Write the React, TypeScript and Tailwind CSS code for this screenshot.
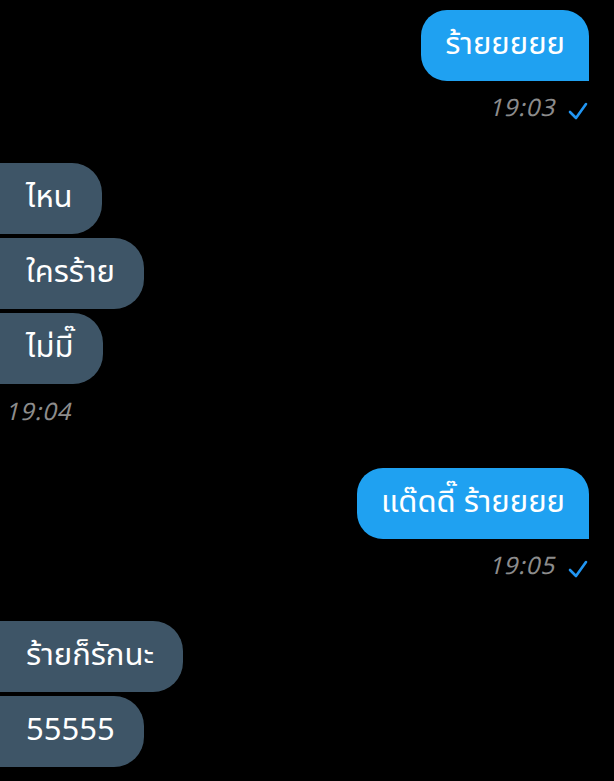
import React from 'react';

const font = { fontFamily: '"Noto Sans Thai", "Noto Sans", "Comic Sans MS", sans-serif' };

const Check = () => (
  <svg width="22" height="20" viewBox="0 0 22 20" className="ml-3 mt-1">
    <path d="M3 11 L9 17 L19 3" fill="none" stroke="#2196f3" strokeWidth="2.6" strokeLinecap="round" strokeLinejoin="round" />
  </svg>
);

const Mine = ({ text, time }: { text: string; time: string }) => (
  <div className="flex flex-col items-end pr-[25px]">
    <div className="h-[71px] flex items-center px-6 bg-[#1fa1f1] text-white text-[31px] rounded-t-[26px] rounded-bl-[26px]">
      {text}
    </div>
    <div className="flex items-center mt-[10px] text-[#8c8c8c] text-[24px] italic tracking-[1px]">
      <span>{time}</span>
      <Check />
    </div>
  </div>
);

const Theirs = ({ msgs, time }: { msgs: string[]; time?: string }) => (
  <div className="flex flex-col items-start gap-[4px]">
    {msgs.map(m => (
      <div key={m} className="h-[71px] flex items-center pl-[26px] pr-[29px] bg-[#3e5567] text-white text-[31px] rounded-r-[30px]">
        {m}
      </div>
    ))}
    {time && <div className="pl-[5px] mt-[7px] text-[#8c8c8c] text-[24px] italic tracking-[1px]">{time}</div>}
  </div>
);

export default function App() {
  return (
    <div className="w-[614px] h-[781px] bg-black overflow-hidden pt-[10px] flex flex-col" style={font}>
      <Mine text="ร้ายยยยย" time="19:03" />
      <div className="mt-[36px]">
        <Theirs msgs={['ไหน', 'ใครร้าย', 'ไม่มี๊']} time="19:04" />
      </div>
      <div className="mt-[37px]">
        <Mine text="แด๊ดดี๊ ร้ายยยย" time="19:05" />
      </div>
      <div className="mt-[36px]">
        <Theirs msgs={['ร้ายก็รักนะ', '55555']} />
      </div>
    </div>
  );
}
